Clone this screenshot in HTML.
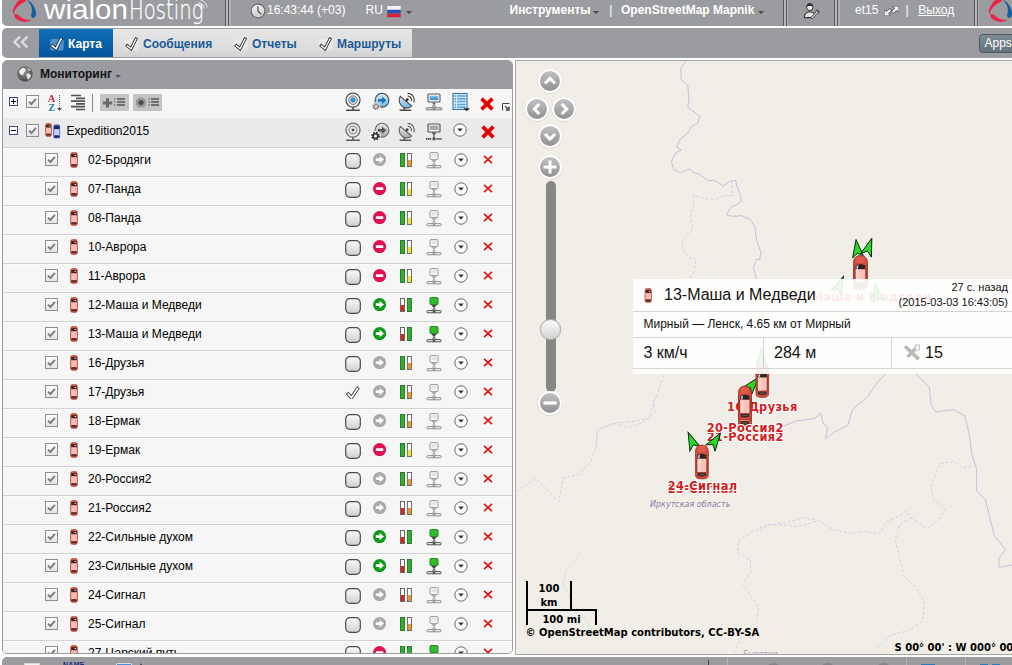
<!DOCTYPE html>
<html lang="ru"><head><meta charset="utf-8"><title>Wialon Hosting</title>
<style>
*{box-sizing:border-box;margin:0;padding:0}
html,body{width:1012px;height:665px;overflow:hidden;background:#fff}
body{position:relative;font-family:"Liberation Sans",sans-serif;font-size:12px;color:#000}
.ic{position:absolute;overflow:visible}
#top{position:absolute;left:2px;top:0;width:1012px;height:26px;background:#9b9c9f;border-radius:0 0 0 5px}
#top .t{position:absolute;top:3px;color:#fff;font-size:12px;line-height:14px;white-space:nowrap}
#top .b{font-weight:bold}
.dsep{position:absolute;top:0;width:5.500px;height:26px;background:linear-gradient(to right,#58585b 0,#58585b 1.200px,#b6b6b9 1.400px,#b6b6b9 2.900px,#58585b 3.100px,#58585b 4.200px,#b0b0b3 4.400px,#b0b0b3 5.500px)}
.caret{position:absolute;width:0;height:0;border-left:3px solid transparent;border-right:3px solid transparent;border-top:3px solid #555}
.caretw{border-top-color:#4a4a4c}
#tabs{position:absolute;left:2px;top:28px;width:1012px;height:30px;background:#9b9c9f;border-radius:5px 0 0 5px}
.tab{position:absolute;top:1px;height:28px;font-weight:bold;font-size:12px;line-height:28px;color:#1a5a96;background:linear-gradient(#e6e6e6,#dedede 60%,#d2d2d2)}
.tab span{position:absolute;top:1px;white-space:nowrap}
.tab.act{background:linear-gradient(#0f70b7,#0a61a8 50%,#06559a);color:#fff}
#apps{position:absolute;left:976.500px;top:6px;width:40px;height:19px;border:1px solid #4f5b61;border-radius:3.500px;background:linear-gradient(#7c8b92,#64747b);color:#fff;font-size:12px;line-height:17px;padding-left:5px}
#panel{position:absolute;left:2px;top:60px;width:511px;height:594px;border:1px solid #9b9c9f;border-radius:5px 5px 5px 5px;background:#f6f6f6;overflow:hidden}
#phead{position:absolute;left:-1px;top:-1px;width:511px;height:30px;background:#9b9c9f}
.ptitle{position:absolute;left:38px;top:7px;font-weight:bold;font-size:12px;line-height:14px;color:#111}
#ptool{position:absolute;left:0;top:28px;width:509px;height:29px;background:#f6f6f6}
.vsep{position:absolute;left:89px;top:4.500px;width:1px;height:18.500px;background:#8a8a8a}
.tbtn{position:absolute;top:5px;width:29px;height:17px;background:#c4c4c4}
#plist{position:absolute;left:0;top:57px;width:509px;height:540px;overflow:hidden}
.row{position:relative;height:29px;border-top:1px solid #d2d2d2;background:#f6f6f6;box-shadow:inset 0 1px 0 #fbfbfb}
.row.grp{background:#eaeaea;border-top:1px solid #eaeaea;box-shadow:none}
.row .nm{position:absolute;top:5px;font-size:12px;line-height:14px;white-space:nowrap;color:#000}
#map{position:absolute;left:515px;top:60px;width:500px;height:595px;border:1px solid #a5a5a5;background:#f1eee8;overflow:hidden}
#bottom{position:absolute;left:2px;top:657px;width:1012px;height:10px;overflow:hidden;background:#9b9c9f;border-radius:5px 0 0 0}
#ztrack{position:absolute;left:29.500px;top:120px;width:10px;height:211px;border-radius:5px;background:#878787}
#zknob{position:absolute;left:24px;top:258px;width:21px;height:21px;border-radius:50%;background:linear-gradient(#fbfbfb,#d2d2d2);border:1px solid #aeaeae;box-shadow:0 0 1px #999}
#sline{position:absolute;left:10px;top:520px;font-family:"DejaVu Sans",sans-serif;font-weight:bold;font-size:10px;color:#000;text-align:center}
#sline .sk{width:46px;height:28px;border:2px solid #000;border-top:none;border-bottom:none;line-height:14px;padding-top:1px}
#sline .sm{width:71px;height:16px;border:2px solid #000;border-bottom:none;line-height:15px;padding-top:1px}
#attr{position:absolute;left:9.500px;top:566px;font-family:"DejaVu Sans",sans-serif;font-weight:bold;font-size:10px;line-height:12px;color:#000;white-space:nowrap}
#coords{position:absolute;left:378.500px;top:581px;font-family:"DejaVu Sans",sans-serif;font-weight:bold;font-size:10px;line-height:12px;color:#000;white-space:nowrap}
#popup{position:absolute;left:117px;top:218px;width:390px;height:95px;background:rgba(255,255,255,.9);color:#111}
#popup .pr1{position:relative;height:33px;border-bottom:1px solid #d4d4d4}
#popup .pt{position:absolute;left:31px;top:6px;font-size:16px;line-height:19px;white-space:nowrap}
#popup .ptm{position:absolute;right:15px;top:1px;font-size:11px;line-height:14.500px;text-align:right;white-space:nowrap}
#popup .pr2{height:26px;border-bottom:1px solid #d4d4d4;padding-left:10.500px;font-size:12px;line-height:24px;white-space:nowrap}
#popup .pr3{position:relative;height:31px;border-bottom:1px solid #d4d4d4;font-size:16px;line-height:30px}
#popup .pr3 span.c1{position:absolute;left:0;top:0;width:131px;height:30px;padding-left:10.500px;border-right:1px solid #d4d4d4}
#popup .pr3 span.c2{position:absolute;left:131px;top:0;width:128px;height:30px;padding-left:10px;border-right:1px solid #d4d4d4}
#popup .pr3 span.c3{position:absolute;left:259px;top:0;width:131px;height:30px}
.ml{font-family:"DejaVu Sans",sans-serif;font-weight:bold;font-size:11.400px;letter-spacing:.35px;fill:#d41c1c;stroke:#fff;stroke-width:2.200px;paint-order:stroke;stroke-linejoin:round;text-anchor:middle}
</style></head><body>
<svg width="0" height="0" style="position:absolute">
<defs>
<linearGradient id="gCb" x1="0" y1="0" x2="0" y2="1"><stop offset="0" stop-color="#ffffff"/><stop offset="1" stop-color="#e4e4e4"/></linearGradient>
<linearGradient id="gBox" x1="0" y1="0" x2="0" y2="1"><stop offset="0" stop-color="#fbfbfb"/><stop offset="1" stop-color="#cfcfcf"/></linearGradient>
<linearGradient id="gBlue" x1="0" y1="0" x2="0" y2="1"><stop offset="0" stop-color="#d8edfb"/><stop offset="1" stop-color="#6fb6e6"/></linearGradient>
<linearGradient id="gScr" x1="0" y1="0" x2="0" y2="1"><stop offset="0" stop-color="#8cc4ea"/><stop offset="1" stop-color="#2f86c4"/></linearGradient>
<linearGradient id="gGr" x1="0" y1="0" x2="0" y2="1"><stop offset="0" stop-color="#e6e6e6"/><stop offset="1" stop-color="#a8a8a8"/></linearGradient>
<linearGradient id="gPan" x1="0" y1="0" x2="0" y2="1"><stop offset="0" stop-color="#c4c4c6"/><stop offset="1" stop-color="#8e8e91"/></linearGradient>
<linearGradient id="gKnob" x1="0" y1="0" x2="0" y2="1"><stop offset="0" stop-color="#f4f4f4"/><stop offset="1" stop-color="#c9c9c9"/></linearGradient>
<linearGradient id="gGlobe" x1="0" y1="0" x2="1" y2="1"><stop offset="0" stop-color="#f2f2f2"/><stop offset="1" stop-color="#8a8a8a"/></linearGradient>

<symbol id="cb" viewBox="0 0 13 13"><rect x=".5" y=".5" width="12" height="12" fill="url(#gCb)" stroke="#8e8e8e"/><path d="M3 6.6 L5.4 9 L10 3.8" fill="none" stroke="#7d7d7d" stroke-width="1.9"/></symbol>
<symbol id="plusbox" viewBox="0 0 9 9"><rect x=".5" y=".5" width="8" height="8" fill="#fff" stroke="#3c4a86"/><path d="M2 4.5H7M4.5 2V7" stroke="#000" stroke-width="1"/></symbol>
<symbol id="minusbox" viewBox="0 0 9 9"><rect x=".5" y=".5" width="8" height="8" fill="#fff" stroke="#3c4a86"/><path d="M2 4.5H7" stroke="#000" stroke-width="1"/></symbol>
<symbol id="align" viewBox="0 0 15 17"><path d="M0 1.5H10M5 4.3H14M0 7.1H14M5 9.9H14M0 12.7H14M5 15.5H14" stroke="#505050" stroke-width="1.7"/></symbol>
<symbol id="addlist" viewBox="0 0 29 16"><path d="M2.800 8.400H12.200M7.500 3.800V13" stroke="#6a6a6a" stroke-width="3"/><path d="M14 4.5H15.5M14 7.5H15.5M14 10.5H15.5" stroke="#555" stroke-width="1.2"/><path d="M17 4.5H25M17 7.5H25M17 10.5H25" stroke="#555" stroke-width="1.4"/></symbol>
<symbol id="dotlist" viewBox="0 0 29 16"><circle cx="8" cy="8" r="5.2" fill="#9a9a9a"/><circle cx="8" cy="8" r="2.6" fill="#4e4e4e"/><path d="M15.5 4.5H17M15.5 7.5H17M15.5 10.5H17" stroke="#555" stroke-width="1.2"/><path d="M18 4.5H26M18 7.5H26M18 10.5H26" stroke="#555" stroke-width="1.4"/></symbol>

<symbol id="webcam" viewBox="0 0 16 19"><circle cx="8" cy="7.7" r="6.7" fill="#f4f4f4" stroke="#4a4a4a" stroke-width="1.2"/><circle cx="8" cy="7.7" r="4" fill="#fff" stroke="#555" stroke-width=".9"/><circle cx="8" cy="7.7" r="2.6" fill="#3b8fce"/><path d="M8 14.4V17" stroke="#555" stroke-width="1.6"/><path d="M1.5 17.3H14.5" stroke="#4a4a4a" stroke-width="1.5"/></symbol>
<symbol id="webcamg" viewBox="0 0 16 19"><circle cx="8" cy="7.7" r="6.7" fill="#e6e6e6" stroke="#6a6a6a" stroke-width="1.2"/><circle cx="8" cy="7.7" r="3.8" fill="#ddd" stroke="#888" stroke-width=".9"/><circle cx="8" cy="7.7" r="1.2" fill="#444"/><path d="M8 14.4V17" stroke="#666" stroke-width="1.6"/><path d="M1.5 17.3H14.5" stroke="#5a5a5a" stroke-width="1.5"/></symbol>
<symbol id="arrgear" viewBox="0 0 20 19"><circle cx="12" cy="7.7" r="6.9" fill="url(#gBlue)" stroke="#444" stroke-width="1.1"/><path d="M8 6.4H12V4L16.3 7.7L12 11.4V9H8Z" fill="#1d73b4"/><circle cx="6" cy="14" r="4.2" fill="#f2f2f2"/><circle cx="6" cy="14" r="2.6" fill="none" stroke="#6a6a6a" stroke-width="1.6" stroke-dasharray="1.3 .75"/><circle cx="6" cy="14" r="2" fill="#f6f6f6" stroke="#777" stroke-width=".8"/><circle cx="6" cy="14" r=".8" fill="#fff" stroke="#888" stroke-width=".5"/></symbol>
<symbol id="arrgearg" viewBox="0 0 22 19"><circle cx="14" cy="7.7" r="6.9" fill="url(#gGr)" stroke="#6a6a6a" stroke-width="1.1"/><path d="M10 6.4H14V4L18.3 7.7L14 11.4V9H10Z" fill="#555"/><circle cx="7.5" cy="13.6" r="5.2" fill="#fff"/><circle cx="7.5" cy="13.6" r="3.3" fill="none" stroke="#333" stroke-width="2.2" stroke-dasharray="1.6 1"/><circle cx="7.5" cy="13.6" r="2.3" fill="none" stroke="#333" stroke-width="1.6"/></symbol>
<symbol id="dish" viewBox="0 0 16 19"><path d="M8.5 1.2A6.6 6.6 0 0 1 14.6 10" fill="none" stroke="#444" stroke-width="1.1"/><path d="M8.6 3.8A4 4 0 0 1 12.2 8.6" fill="none" stroke="#444" stroke-width="1.1"/><path d="M1.6 4.2L12.4 13.4A7.2 7.2 0 0 1 1.6 4.2Z" fill="url(#gBlue)" stroke="#444" stroke-width="1"/><circle cx="8.2" cy="7.4" r="1.4" fill="#333"/><path d="M7 9L8.2 7.4" stroke="#333" stroke-width="1"/><path d="M5.4 14.2V17" stroke="#555" stroke-width="1.8"/><path d="M1 17.3H12" stroke="#4a4a4a" stroke-width="1.5"/></symbol>
<symbol id="dishg" viewBox="0 0 16 19"><path d="M8.5 1.2A6.6 6.6 0 0 1 14.6 10" fill="none" stroke="#666" stroke-width="1.1"/><path d="M8.6 3.8A4 4 0 0 1 12.2 8.6" fill="none" stroke="#666" stroke-width="1.1"/><path d="M1.6 4.2L12.4 13.4A7.2 7.2 0 0 1 1.6 4.2Z" fill="url(#gGr)" stroke="#5a5a5a" stroke-width="1"/><circle cx="8.2" cy="7.4" r="1.4" fill="#444"/><path d="M7 9L8.2 7.4" stroke="#444" stroke-width="1"/><path d="M5.4 14.2V17" stroke="#666" stroke-width="1.8"/><path d="M1 17.3H12" stroke="#5a5a5a" stroke-width="1.5"/></symbol>
<symbol id="netblue" viewBox="0 0 18 18"><rect x="3" y="1" width="12" height="8" rx="1" fill="#fff" stroke="#555" stroke-width="1.1"/><rect x="4.6" y="2.6" width="8.8" height="4.6" fill="url(#gScr)"/><path d="M7 9.6H11L10 11H8Z" fill="#666"/><path d="M9 11V14" stroke="#666" stroke-width="1"/><path d="M9 11L6.5 15M9 11L11.500 15" stroke="#888" stroke-width=".7"/><rect x="1" y="14.800" width="16" height="2" rx="1" fill="#eee" stroke="#666" stroke-width=".9"/><rect x="7.800" y="14.500" width="2.400" height="2.600" fill="#888"/></symbol>
<symbol id="netdark" viewBox="0 0 18 18"><rect x="3" y="1" width="12" height="8" rx="1" fill="#f2f2f2" stroke="#555" stroke-width="1.2"/><rect x="4.6" y="2.600" width="8.800" height="4.400" fill="#aaa"/><path d="M6.500 9.600H11.500L10 11.500H8Z" fill="#555"/><path d="M9 11V14.500" stroke="#555" stroke-width="1.200"/><path d="M1 15.800H6.500M11.500 15.800H17" stroke="#444" stroke-width="1.800" stroke-dasharray="1.400 .5"/><rect x="7.600" y="14.400" width="2.800" height="2.800" fill="#444"/></symbol>
<symbol id="listblue" viewBox="0 0 19 19"><rect x="1" y="1" width="14" height="16" fill="#d6ebfa" stroke="#3f74a0" stroke-width="1.1"/><path d="M2.500 3.500H4M5 3.500H13.500M2.500 6.300H4M5 6.300H13.500M2.500 9.100H4M5 9.100H13.500M2.500 11.900H4M5 11.900H13.500M2.500 14.700H4M5 14.700H13.500" stroke="#55a3dc" stroke-width="1.500"/><path d="M11.500 15.800H18L14.750 18.800Z" fill="#222"/></symbol>
<symbol id="bigx" viewBox="0 0 13 13"><path d="M1.500 1.500L11.500 11.500M11.500 1.500L1.500 11.500" stroke="#e20000" stroke-width="3.400"/></symbol>
<symbol id="smx" viewBox="0 0 10 9"><path d="M1 .800L9 8.200M9 .800L1 8.200" stroke="#dc1414" stroke-width="1.700"/></symbol>
<symbol id="resize" viewBox="0 0 8 8"><path d="M.5 7.500V.5H7.500" fill="none" stroke="#444" stroke-width="1"/><path d="M3 3L7 7M7 3.500V7H3.500" fill="none" stroke="#444" stroke-width="1.100"/><rect x="4.500" y="4.500" width="3" height="3" fill="#555"/></symbol>
<symbol id="cdown" viewBox="0 0 14 14"><circle cx="7" cy="7" r="6.200" fill="#fff" stroke="#555" stroke-width=".9"/><path d="M4.200 5.600H9.800L7 8.800Z" fill="#333"/></symbol>
<symbol id="rbox" viewBox="0 0 16 16"><rect x=".7" y=".7" width="14.600" height="14.600" rx="4.200" fill="url(#gBox)" stroke="#4a4a4a" stroke-width="1.200"/></symbol>
<symbol id="tick" viewBox="0 0 14 14"><path d="M2.300 9.300L5.500 12.700L11.400 3.800" fill="none" stroke="#444" stroke-width="3.500" stroke-linejoin="miter" stroke-linecap="square"/><path d="M2.300 9.300L5.500 12.700L11.400 3.800" fill="none" stroke="#fff" stroke-width="1.700" stroke-linejoin="miter" stroke-linecap="square"/></symbol>
<symbol id="agrey" viewBox="0 0 13 13"><circle cx="6.500" cy="6.500" r="6.500" fill="#a9a9ab"/><path d="M2.800 5.200H6.500V2.800L10.800 6.500L6.500 10.200V7.800H2.800Z" fill="#fff"/></symbol>
<symbol id="agreen" viewBox="0 0 13 13"><circle cx="6.500" cy="6.500" r="6.500" fill="#0f9a1e"/><path d="M2.800 5.200H6.500V2.800L10.800 6.500L6.500 10.200V7.800H2.800Z" fill="#fff"/></symbol>
<symbol id="stop" viewBox="0 0 13 13"><circle cx="6.500" cy="6.500" r="6.500" fill="#e0114f"/><rect x="2.800" y="5.200" width="7.400" height="2.600" rx=".6" fill="#fff"/></symbol>
<symbol id="go" viewBox="0 0 13 14"><rect x="0.5" y=".5" width="4" height="13" fill="#2fb02f" stroke="#277027" stroke-width=".9"/><rect x="7.4" y=".5" width="4" height="13" fill="#fff" stroke="#5a5a5a" stroke-width=".9"/><rect x="7.8500000000000005" y="7" width="3.100" height="6.050" fill="#e8962c"/></symbol>
<symbol id="gy" viewBox="0 0 13 14"><rect x="0.5" y=".5" width="4" height="13" fill="#2fb02f" stroke="#277027" stroke-width=".9"/><rect x="7.4" y=".5" width="4" height="13" fill="#fff" stroke="#5a5a5a" stroke-width=".9"/><rect x="7.8500000000000005" y="7" width="3.100" height="6.050" fill="#f3e32e"/></symbol>
<symbol id="rg" viewBox="0 0 13 14"><rect x="0.5" y=".5" width="4" height="13" fill="#fff" stroke="#5a5a5a" stroke-width=".9"/><rect x="0.95" y="7" width="3.100" height="6.050" fill="#d42424"/><rect x="7.4" y=".5" width="4" height="13" fill="#2fb02f" stroke="#277027" stroke-width=".9"/></symbol>
<symbol id="ro" viewBox="0 0 13 14"><rect x="0.5" y=".5" width="4" height="13" fill="#fff" stroke="#5a5a5a" stroke-width=".9"/><rect x="0.95" y="7" width="3.100" height="6.050" fill="#d42424"/><rect x="7.4" y=".5" width="4" height="13" fill="#fff" stroke="#5a5a5a" stroke-width=".9"/><rect x="7.8500000000000005" y="7" width="3.100" height="6.050" fill="#e8962c"/></symbol>
<symbol id="gg" viewBox="0 0 13 14"><rect x="0.5" y=".5" width="4" height="13" fill="#2fb02f" stroke="#277027" stroke-width=".9"/><rect x="7.4" y=".5" width="4" height="13" fill="#2fb02f" stroke="#277027" stroke-width=".9"/></symbol>
<symbol id="ngrey" viewBox="0 0 16 17"><rect x="4" y=".6" width="8" height="7" rx=".8" fill="#f4f4f4" stroke="#9a9a9a" stroke-width="1"/><rect x="5.600" y="2.200" width="4.800" height="2.600" fill="#e2e2e2"/><path d="M5.500 8H10.500L9 10H7Z" fill="#aaa"/><path d="M8 10V13" stroke="#999" stroke-width="1"/><path d="M8 10.500L5.500 14M8 10.500L10.500 14" stroke="#aaa" stroke-width=".7"/><rect x=".8" y="13.600" width="14.400" height="2.200" rx="1.100" fill="#f0f0f0" stroke="#8a8a8a" stroke-width=".9"/><rect x="6.800" y="13.400" width="2.400" height="2.600" fill="#999"/></symbol>
<symbol id="ngreen" viewBox="0 0 16 17"><rect x="4" y=".6" width="8" height="7" rx=".8" fill="#35b535" stroke="#1f8a1f" stroke-width="1"/><rect x="5.400" y="1.800" width="5.200" height="3.600" fill="#2fc02f"/><path d="M5.500 8H10.500L9 10H7Z" fill="#444"/><path d="M8 10V13" stroke="#444" stroke-width="1"/><path d="M8 10.500L5.500 14M8 10.500L10.500 14" stroke="#666" stroke-width=".7"/><rect x=".8" y="13.600" width="14.400" height="2.200" rx="1.100" fill="#eee" stroke="#444" stroke-width=".9"/><rect x="6.800" y="13.400" width="2.400" height="2.600" fill="#555"/></symbol>

<symbol id="car" viewBox="0 0 8 16"><rect x=".3" y=".2" width="7.400" height="15.600" rx="2.400" fill="#b9483a"/><rect x=".3" y="5" width="7.400" height="7.500" fill="#c4695d"/><path d="M1.200 2.600Q4 1.600 6.800 2.600L6.500 5.400H1.500Z" fill="#3d2420"/><rect x="4.600" y="3" width="1.400" height="1" fill="#e9e0dc"/><rect x="1.200" y="5.300" width="5.600" height="6.900" fill="#f7bdb4"/><rect x="1.400" y="12.300" width="5.200" height="1.700" rx=".5" fill="#4b2f29"/><rect x="1.600" y=".5" width="4.800" height="1.300" rx=".65" fill="#d45e4c"/></symbol>
<symbol id="carb" viewBox="0 0 8 16"><rect x=".3" y=".2" width="7.400" height="15.600" rx="2.400" fill="#34499a"/><rect x=".3" y="5" width="7.400" height="7.500" fill="#566ab6"/><path d="M1.200 2.600Q4 1.600 6.800 2.600L6.500 5.400H1.500Z" fill="#1d2450"/><rect x="1.200" y="5.300" width="5.600" height="6.900" fill="#c6cef6"/><rect x="1.400" y="12.300" width="5.200" height="1.700" rx=".5" fill="#222a5c"/><rect x="1.600" y=".5" width="4.800" height="1.300" rx=".65" fill="#4860b2"/></symbol>
<symbol id="cars2" viewBox="0 0 16 18"><svg x="0" y="1" width="7" height="14" viewBox="0 0 8 16"><use href="#car"/></svg><svg x="8" y="2.300" width="7.500" height="14.500" viewBox="0 0 8 16"><use href="#carb"/></svg></symbol>

<symbol id="globe" viewBox="0 0 16 16"><radialGradient id="gGl2" cx=".4" cy=".3" r=".8"><stop offset="0" stop-color="#9a9a9a"/><stop offset="1" stop-color="#3c3c3c"/></radialGradient><circle cx="8" cy="8" r="7.500" fill="url(#gGl2)" stroke="#6a6a6a" stroke-width=".6"/><path d="M2.200 5.500C3 3.500 5 2 7 1.800C7.500 3 9 3.500 8.500 5C7.500 6 6.500 6.500 6.500 8C6 9.500 5 9.500 4 8.500C3 7.800 2 7 2.200 5.500Z" fill="#ededed"/><path d="M9.500 8C11 7 13 7.500 14 9C13.800 11.500 12.500 13 10.800 13.800C10.500 12 9.200 10.500 9.500 8Z" fill="#e2e2e2"/><path d="M10.500 2C12 2.500 13 3.500 13.600 4.600C12.500 5.200 11 4.500 10.500 2Z" fill="#dcdcdc"/></symbol>
<symbol id="clock" viewBox="0 0 16 16"><circle cx="8" cy="8" r="6.900" fill="url(#gKnob)" stroke="#66676a" stroke-width="1.100"/><path d="M8 3.200V8.200L11.200 11.200" fill="none" stroke="#4a4a4a" stroke-width="1.200"/></symbol>
<symbol id="flag" viewBox="0 0 14 12"><rect x="0" y="0" width="14" height="4" fill="#f4f4f4"/><rect x="0" y="4" width="14" height="4" fill="#2a50b0"/><rect x="0" y="8" width="14" height="4" fill="#d8213a"/></symbol>
<symbol id="user" viewBox="0 0 17 17"><path d="M1.300 15.600C1.300 12 3.500 10.200 6.800 9.800C9 10 10.500 10.500 11.800 11.800L9 15.600Z" fill="#e6e6e6" stroke="#333" stroke-width="1.100" stroke-linejoin="round"/><circle cx="6.800" cy="5.300" r="3.200" fill="#ececec" stroke="#333" stroke-width="1"/><path d="M3.500 5C3.300 2.300 5 .9 6.800 .9C8.600 .9 10.300 2.300 10.100 5C9 3.800 4.600 3.800 3.500 5Z" fill="#333"/><path d="M8.200 15.400L13 10.200C12.600 8.800 13.600 7.600 15 7.800L14 9.300L15.200 10.300L16.300 9C16.600 10.500 15.600 11.600 14.200 11.400L9.600 16.600C9 17 8 16.200 8.200 15.400Z" fill="#f2f2f2" stroke="#333" stroke-width=".9" stroke-linejoin="round"/></symbol>
<symbol id="expand" viewBox="0 0 15 10"><g fill="#ececec" stroke="#55565a" stroke-width="1.400" paint-order="stroke" stroke-linejoin="round"><path d="M14.500 .4H9.200L11 2.200L7.800 5.400L9.500 7.100L12.700 3.900L14.500 5.700Z"/><path d="M.5 9.600H5.800L4 7.800L7.200 4.600L5.500 2.900L2.300 6.100L.5 4.300Z"/></g></symbol>
<symbol id="dbl" viewBox="0 0 18 14"><path d="M8 1.500L2.500 7L8 12.500M15.500 1.500L10 7L15.500 12.500" fill="none" stroke="#dedede" stroke-width="2.400"/></symbol>
<symbol id="tchk" viewBox="0 0 16 15"><rect x="1.100" y="2.900" width="13.600" height="11.900" rx="2.500" fill="#fff" opacity=".3"/><path d="M3.300 9.800L7 12.800L12 3" fill="none" stroke="#333" stroke-width="3.100" stroke-linejoin="miter" stroke-linecap="square"/><path d="M3.300 9.800L7 12.800L12 3" fill="none" stroke="#fff" stroke-width="1.300" stroke-linejoin="miter" stroke-linecap="square"/></symbol>
<symbol id="tchkw" viewBox="0 0 16 15"><rect x="1.100" y="2.900" width="13.600" height="11.900" rx="2.500" fill="#6aa6dc" opacity=".7"/><path d="M3.300 9.800L7 12.800L12 3" fill="none" stroke="#0b2744" stroke-width="3.400" stroke-linejoin="miter" stroke-linecap="square"/><path d="M3.300 9.800L7 12.800L12 3" fill="none" stroke="#fff" stroke-width="1.700" stroke-linejoin="miter" stroke-linecap="square"/></symbol>
<symbol id="logo" viewBox="10 0 28 26"><path d="M19.700 -0.500L26 -0.500L26 1.200C23.500 2 18.500 5.500 16.600 7.800C15.300 9.500 14.600 11 14.400 12L13.900 14.300C12.700 13 12.700 10.500 13.500 8.600C14.500 6 17 2 19.700 -0.500Z" fill="#f0214b"/><path d="M14.300 15.200C14 13.800 16 13.600 17.400 14.500C19 15.500 19.500 16.200 20.900 17.200C22.500 18.300 24 19.100 25.600 19.500C27 19.900 28.500 20 29.900 19.900L32.200 19.200C31.500 20 30.500 20.700 29.100 21.100C27.500 21.700 26 21.900 24.400 21.900C22.500 21.800 21 21.400 19.700 20.700C18 19.900 16.800 19.200 15.800 18.400C15 17.600 14.500 16.400 14.300 15.200Z" fill="#f0214b"/><path d="M27.200 -0.300C29 0.800 30.500 2 31.500 3.100C32.800 4.500 33.900 6 34.600 7.800C35.400 9.500 35.900 11 36 12.900C36.100 14.200 35.900 15.500 35.400 16.400C34.900 17.300 34.200 17.800 33.400 18L32.200 17.800C31.500 17.300 31.100 16.500 31.100 15.600C31.200 14.300 31.700 13 31.800 11.700C31.900 10 31.800 8.500 31.500 7C31 5 29.500 3 28.300 1.600Z" fill="#1361a5"/></symbol>

<symbol id="panU" viewBox="0 0 26 26"><circle cx="13" cy="13.400" r="12.300" fill="#000" opacity=".13"/><circle cx="13" cy="13" r="11" fill="url(#gPan)" stroke="#fff" stroke-width="2"/><path d="M8 15.500L13 10.500L18 15.500" fill="none" stroke="#fff" stroke-width="3.1"/></symbol>
<symbol id="panD" viewBox="0 0 26 26"><circle cx="13" cy="13.400" r="12.300" fill="#000" opacity=".13"/><circle cx="13" cy="13" r="11" fill="url(#gPan)" stroke="#fff" stroke-width="2"/><path d="M8 11L13 16L18 11" fill="none" stroke="#fff" stroke-width="3.1"/></symbol>
<symbol id="panL" viewBox="0 0 26 26"><circle cx="13" cy="13.400" r="12.300" fill="#000" opacity=".13"/><circle cx="13" cy="13" r="11" fill="url(#gPan)" stroke="#fff" stroke-width="2"/><path d="M15.300 8L10.300 13L15.300 18" fill="none" stroke="#fff" stroke-width="3.1"/></symbol>
<symbol id="panR" viewBox="0 0 26 26"><circle cx="13" cy="13.400" r="12.300" fill="#000" opacity=".13"/><circle cx="13" cy="13" r="11" fill="url(#gPan)" stroke="#fff" stroke-width="2"/><path d="M10.700 8L15.700 13L10.700 18" fill="none" stroke="#fff" stroke-width="3.1"/></symbol>
<symbol id="zIn" viewBox="0 0 26 26"><circle cx="13" cy="13.400" r="12.300" fill="#000" opacity=".13"/><circle cx="13" cy="13" r="11" fill="url(#gPan)" stroke="#fff" stroke-width="2"/><path d="M6.500 13H19.500M13 6.500V19.500" fill="none" stroke="#fff" stroke-width="3"/></symbol>
<symbol id="zOut" viewBox="0 0 26 26"><circle cx="13" cy="13.400" r="12.300" fill="#000" opacity=".13"/><circle cx="13" cy="13" r="11" fill="url(#gPan)" stroke="#fff" stroke-width="2"/><path d="M6.500 13H19.500" fill="none" stroke="#fff" stroke-width="3.2"/></symbol>
<symbol id="mcar" viewBox="0 0 14 35"><path d="M.5 8C.5 3 3 .5 7 .5C11 .5 13.500 3 13.500 8V30C13.500 33 11.500 34.500 7 34.500C2.500 34.500 .5 33 .5 30Z" fill="#cf4b3d" stroke="#9a3328" stroke-width=".8"/><path d="M3 2.500C5 1.400 9 1.400 11 2.500L10.500 8H3.500Z" fill="#de6453" opacity=".8"/><rect x="1" y="13" width="1.600" height="15" fill="#a93a2e"/><rect x="11.400" y="13" width="1.600" height="15" fill="#a93a2e"/><path d="M2.300 11C4.500 8.800 9.500 8.800 11.700 11L11 14.500H3Z" fill="#2b2622"/><path d="M3.200 11.300L5.200 10.100L4.500 13.800H3.300Z" fill="#f2f2f2" opacity=".85"/><path d="M-.3 11.300L1 10.600M14.300 11.300L13 10.600" stroke="#8a2d22" stroke-width=".9"/><rect x="2.600" y="14.200" width="8.800" height="13.300" rx=".8" fill="#f8c3bb"/><rect x="2.600" y="14.200" width="3" height="13.300" fill="#fbd9d4" opacity=".7"/><path d="M3 28.300H11L11.300 31.200C9 32.300 5 32.300 2.700 31.200Z" fill="#3a2b26"/><path d="M4.500 29.300H9.500V30.600H4.500Z" fill="#6d6a60" opacity=".7"/></symbol>
<symbol id="sat" viewBox="0 0 18 18"><path d="M2 2.300L15.800 15.300" stroke="#b9b9b9" stroke-width="3.600"/><path d="M14 3L4.500 13" stroke="#b9b9b9" stroke-width="3.400"/><rect x="12.300" y="1" width="4" height="5" fill="#fff" stroke="#b9b9b9" stroke-width=".9"/></symbol>
</defs>
</svg>
<div id="top">
<svg class="ic" style="left:8px;top:0" width="28" height="26"><use href="#logo"/></svg>
<svg class="ic" style="left:42px;top:0" width="170" height="26" viewBox="0 0 170 26"><text x="0" y="19.300" font-family="Liberation Sans,sans-serif" font-size="28" fill="#fff" textLength="84" lengthAdjust="spacingAndGlyphs">wialon</text><text x="85" y="19.400" font-family="DejaVu Sans,sans-serif" font-weight="200" font-size="26.500" fill="#fff" textLength="74.500" lengthAdjust="spacingAndGlyphs" stroke="#fff" stroke-width=".3">Hosting</text><path d="M153.500 5.300A5.500 5.500 0 0 1 157.600 9.500M154.500 2.300A8.500 8.500 0 0 1 160.500 8.500M155.500 -.6A11.500 11.500 0 0 1 163.300 7.500" fill="none" stroke="#fff" stroke-width=".9" opacity=".9"/></svg>
<div class="dsep" style="left:223px"></div>
<svg class="ic" style="left:247.500px;top:3px" width="16" height="16"><use href="#clock"/></svg>
<span class="t" style="left:265px">16:43:44 (+03)</span>
<span class="t" style="left:363.600px">RU</span>
<svg class="ic" style="left:385px;top:5.500px" width="14" height="11.500" preserveAspectRatio="none"><use href="#flag"/></svg>
<span class="caret caretw" style="left:404px;top:11px"></span>
<span class="t b" style="left:507.500px">Инструменты</span>
<span class="caret caretw" style="left:590.500px;top:11px"></span>
<span class="t" style="left:607.200px">|</span>
<span class="t b" style="left:619px">OpenStreetMap Mapnik</span>
<span class="caret caretw" style="left:755.600px;top:11px"></span>
<div class="dsep" style="left:780.800px"></div>
<svg class="ic" style="left:801px;top:2.200px" width="17" height="17"><use href="#user"/></svg>
<div class="dsep" style="left:832.200px"></div>
<span class="t" style="left:853px">et15</span>
<svg class="ic" style="left:882px;top:6px" width="15" height="10"><use href="#expand"/></svg>
<span class="t" style="left:903.500px">|</span>
<span class="t" style="left:916.300px;text-decoration:underline">Выход</span>
<div class="dsep" style="left:971.500px"></div>
<svg class="ic" style="left:984px;top:0" width="28" height="26"><use href="#logo"/></svg>
</div>
<div id="tabs">
<svg class="ic" style="left:10px;top:7px" width="18" height="14"><use href="#dbl"/></svg>
<div class="tab act" style="left:37px;width:74px"><svg class="ic" style="left:10px;top:7px" width="16" height="15"><use href="#tchkw"/></svg><span style="left:29px">Карта</span></div>
<div class="tab" style="left:111px;width:299px">
<svg class="ic" style="left:11px;top:7px" width="16" height="15"><use href="#tchk"/></svg><span style="left:30px">Сообщения</span>
<svg class="ic" style="left:120px;top:7px" width="16" height="15"><use href="#tchk"/></svg><span style="left:139px">Отчеты</span>
<svg class="ic" style="left:205px;top:7px" width="16" height="15"><use href="#tchk"/></svg><span style="left:224px">Маршруты</span>
</div>
<div id="apps">Apps</div>
</div>
<div id="panel">
<div id="phead"><svg class="ic" style="left:15px;top:6px" width="16" height="16" ><use href="#globe"/></svg><span class="ptitle">Мониторинг</span><span class="caret" style="left:113px;top:15px"></span></div>
<div id="ptool"><svg class="ic" style="left:6px;top:8px" width="9" height="9" ><use href="#plusbox"/></svg><svg class="ic" style="left:23px;top:6px" width="13" height="13" ><use href="#cb"/></svg><svg class="ic" style="left:45px;top:5px" width="15" height="18" viewBox="0 0 15 18"><text x="0" y="8" font-family="Liberation Serif,serif" font-weight="bold" font-size="10" fill="#d8173f">A</text><text x="0.3" y="17" font-family="Liberation Serif,serif" font-weight="bold" font-size="10" fill="#1d79a8">Z</text><path d="M11.5 1V14" stroke="#666" stroke-width="1" stroke-dasharray="1 1"/><path d="M9 14H14L11.5 17Z" fill="#555"/></svg><svg class="ic" style="left:68px;top:5px" width="15" height="17" ><use href="#align"/></svg><span class="vsep"></span><span class="tbtn" style="left:97px"><svg class="ic" style="left:0px;top:0px" width="29" height="17" ><use href="#addlist"/></svg></span><span class="tbtn" style="left:130px"><svg class="ic" style="left:0px;top:0px" width="29" height="17" ><use href="#dotlist"/></svg></span><svg class="ic" style="left:341px;top:3px" width="18" height="20" ><use href="#webcam"/></svg><svg class="ic" style="left:367px;top:3px" width="20" height="20" ><use href="#arrgear"/></svg><svg class="ic" style="left:395px;top:3px" width="18" height="20" ><use href="#dish"/></svg><svg class="ic" style="left:422px;top:3px" width="18" height="20" ><use href="#netblue"/></svg><svg class="ic" style="left:449px;top:3px" width="19" height="20" ><use href="#listblue"/></svg><svg class="ic" style="left:476.8px;top:7.8px" width="14" height="14" ><use href="#bigx"/></svg><svg class="ic" style="left:499px;top:14px" width="8" height="8" ><use href="#resize"/></svg></div>
<div id="plist">
<div class="row grp"><svg class="ic" style="left:6px;top:7px" width="9" height="9" ><use href="#minusbox"/></svg><svg class="ic" style="left:23px;top:5px" width="13" height="13" ><use href="#cb"/></svg><svg class="ic" style="left:42px;top:3px" width="16" height="18" ><use href="#cars2"/></svg><span class="nm" style="left:63.500px;top:4.500px">Expedition2015</span><svg class="ic" style="left:341px;top:2.5px" width="18" height="20" ><use href="#webcamg"/></svg><svg class="ic" style="left:365px;top:2.5px" width="22" height="20" ><use href="#arrgearg"/></svg><svg class="ic" style="left:395px;top:2.5px" width="18" height="20" ><use href="#dishg"/></svg><svg class="ic" style="left:422px;top:2.5px" width="18" height="20" ><use href="#netdark"/></svg><svg class="ic" style="left:450.4px;top:4.4px" width="14" height="14" ><use href="#cdown"/></svg><svg class="ic" style="left:477.5px;top:5.5px" width="14" height="14" ><use href="#bigx"/></svg></div>
<div class="row"><svg class="ic" style="left:42px;top:5px" width="13" height="13" ><use href="#cb"/></svg><svg class="ic" style="left:67px;top:4px" width="8" height="16" ><use href="#car"/></svg><span class="nm" style="left:85px">02-Бродяги</span><svg class="ic" style="left:342px;top:5px" width="16" height="16" ><use href="#rbox"/></svg><svg class="ic" style="left:369.9px;top:4.7px" width="13.2" height="13.2" ><use href="#agrey"/></svg><svg class="ic" style="left:397px;top:5px" width="13" height="14" ><use href="#go"/></svg><svg class="ic" style="left:423px;top:3.7px" width="16" height="17" ><use href="#ngrey"/></svg><svg class="ic" style="left:450.5px;top:5px" width="14" height="14" ><use href="#cdown"/></svg><svg class="ic" style="left:480px;top:7.2px" width="10" height="9" ><use href="#smx"/></svg></div>
<div class="row"><svg class="ic" style="left:42px;top:5px" width="13" height="13" ><use href="#cb"/></svg><svg class="ic" style="left:67px;top:4px" width="8" height="16" ><use href="#car"/></svg><span class="nm" style="left:85px">07-Панда</span><svg class="ic" style="left:342px;top:5px" width="16" height="16" ><use href="#rbox"/></svg><svg class="ic" style="left:369.9px;top:4.7px" width="13.2" height="13.2" ><use href="#stop"/></svg><svg class="ic" style="left:397px;top:5px" width="13" height="14" ><use href="#gy"/></svg><svg class="ic" style="left:423px;top:3.7px" width="16" height="17" ><use href="#ngrey"/></svg><svg class="ic" style="left:450.5px;top:5px" width="14" height="14" ><use href="#cdown"/></svg><svg class="ic" style="left:480px;top:7.2px" width="10" height="9" ><use href="#smx"/></svg></div>
<div class="row"><svg class="ic" style="left:42px;top:5px" width="13" height="13" ><use href="#cb"/></svg><svg class="ic" style="left:67px;top:4px" width="8" height="16" ><use href="#car"/></svg><span class="nm" style="left:85px">08-Панда</span><svg class="ic" style="left:342px;top:5px" width="16" height="16" ><use href="#rbox"/></svg><svg class="ic" style="left:369.9px;top:4.7px" width="13.2" height="13.2" ><use href="#stop"/></svg><svg class="ic" style="left:397px;top:5px" width="13" height="14" ><use href="#gy"/></svg><svg class="ic" style="left:423px;top:3.7px" width="16" height="17" ><use href="#ngrey"/></svg><svg class="ic" style="left:450.5px;top:5px" width="14" height="14" ><use href="#cdown"/></svg><svg class="ic" style="left:480px;top:7.2px" width="10" height="9" ><use href="#smx"/></svg></div>
<div class="row"><svg class="ic" style="left:42px;top:5px" width="13" height="13" ><use href="#cb"/></svg><svg class="ic" style="left:67px;top:4px" width="8" height="16" ><use href="#car"/></svg><span class="nm" style="left:85px">10-Аврора</span><svg class="ic" style="left:342px;top:5px" width="16" height="16" ><use href="#rbox"/></svg><svg class="ic" style="left:369.9px;top:4.7px" width="13.2" height="13.2" ><use href="#stop"/></svg><svg class="ic" style="left:397px;top:5px" width="13" height="14" ><use href="#gy"/></svg><svg class="ic" style="left:423px;top:3.7px" width="16" height="17" ><use href="#ngrey"/></svg><svg class="ic" style="left:450.5px;top:5px" width="14" height="14" ><use href="#cdown"/></svg><svg class="ic" style="left:480px;top:7.2px" width="10" height="9" ><use href="#smx"/></svg></div>
<div class="row"><svg class="ic" style="left:42px;top:5px" width="13" height="13" ><use href="#cb"/></svg><svg class="ic" style="left:67px;top:4px" width="8" height="16" ><use href="#car"/></svg><span class="nm" style="left:85px">11-Аврора</span><svg class="ic" style="left:342px;top:5px" width="16" height="16" ><use href="#rbox"/></svg><svg class="ic" style="left:369.9px;top:4.7px" width="13.2" height="13.2" ><use href="#stop"/></svg><svg class="ic" style="left:397px;top:5px" width="13" height="14" ><use href="#gy"/></svg><svg class="ic" style="left:423px;top:3.7px" width="16" height="17" ><use href="#ngrey"/></svg><svg class="ic" style="left:450.5px;top:5px" width="14" height="14" ><use href="#cdown"/></svg><svg class="ic" style="left:480px;top:7.2px" width="10" height="9" ><use href="#smx"/></svg></div>
<div class="row"><svg class="ic" style="left:42px;top:5px" width="13" height="13" ><use href="#cb"/></svg><svg class="ic" style="left:67px;top:4px" width="8" height="16" ><use href="#car"/></svg><span class="nm" style="left:85px">12-Маша и Медведи</span><svg class="ic" style="left:342px;top:5px" width="16" height="16" ><use href="#rbox"/></svg><svg class="ic" style="left:369.9px;top:4.7px" width="13.2" height="13.2" ><use href="#agreen"/></svg><svg class="ic" style="left:397px;top:5px" width="13" height="14" ><use href="#rg"/></svg><svg class="ic" style="left:423px;top:3.7px" width="16" height="17" ><use href="#ngreen"/></svg><svg class="ic" style="left:450.5px;top:5px" width="14" height="14" ><use href="#cdown"/></svg><svg class="ic" style="left:480px;top:7.2px" width="10" height="9" ><use href="#smx"/></svg></div>
<div class="row"><svg class="ic" style="left:42px;top:5px" width="13" height="13" ><use href="#cb"/></svg><svg class="ic" style="left:67px;top:4px" width="8" height="16" ><use href="#car"/></svg><span class="nm" style="left:85px">13-Маша и Медведи</span><svg class="ic" style="left:342px;top:5px" width="16" height="16" ><use href="#rbox"/></svg><svg class="ic" style="left:369.9px;top:4.7px" width="13.2" height="13.2" ><use href="#agreen"/></svg><svg class="ic" style="left:397px;top:5px" width="13" height="14" ><use href="#rg"/></svg><svg class="ic" style="left:423px;top:3.7px" width="16" height="17" ><use href="#ngreen"/></svg><svg class="ic" style="left:450.5px;top:5px" width="14" height="14" ><use href="#cdown"/></svg><svg class="ic" style="left:480px;top:7.2px" width="10" height="9" ><use href="#smx"/></svg></div>
<div class="row"><svg class="ic" style="left:42px;top:5px" width="13" height="13" ><use href="#cb"/></svg><svg class="ic" style="left:67px;top:4px" width="8" height="16" ><use href="#car"/></svg><span class="nm" style="left:85px">16-Друзья</span><svg class="ic" style="left:342px;top:5px" width="16" height="16" ><use href="#rbox"/></svg><svg class="ic" style="left:369.9px;top:4.7px" width="13.2" height="13.2" ><use href="#agrey"/></svg><svg class="ic" style="left:397px;top:5px" width="13" height="14" ><use href="#go"/></svg><svg class="ic" style="left:423px;top:3.7px" width="16" height="17" ><use href="#ngrey"/></svg><svg class="ic" style="left:450.5px;top:5px" width="14" height="14" ><use href="#cdown"/></svg><svg class="ic" style="left:480px;top:7.2px" width="10" height="9" ><use href="#smx"/></svg></div>
<div class="row"><svg class="ic" style="left:42px;top:5px" width="13" height="13" ><use href="#cb"/></svg><svg class="ic" style="left:67px;top:4px" width="8" height="16" ><use href="#car"/></svg><span class="nm" style="left:85px">17-Друзья</span><svg class="ic" style="left:343px;top:5px" width="14" height="14" ><use href="#tick"/></svg><svg class="ic" style="left:369.9px;top:4.7px" width="13.2" height="13.2" ><use href="#agrey"/></svg><svg class="ic" style="left:397px;top:5px" width="13" height="14" ><use href="#go"/></svg><svg class="ic" style="left:423px;top:3.7px" width="16" height="17" ><use href="#ngrey"/></svg><svg class="ic" style="left:450.5px;top:5px" width="14" height="14" ><use href="#cdown"/></svg><svg class="ic" style="left:480px;top:7.2px" width="10" height="9" ><use href="#smx"/></svg></div>
<div class="row"><svg class="ic" style="left:42px;top:5px" width="13" height="13" ><use href="#cb"/></svg><svg class="ic" style="left:67px;top:4px" width="8" height="16" ><use href="#car"/></svg><span class="nm" style="left:85px">18-Ермак</span><svg class="ic" style="left:342px;top:5px" width="16" height="16" ><use href="#rbox"/></svg><svg class="ic" style="left:369.9px;top:4.7px" width="13.2" height="13.2" ><use href="#agrey"/></svg><svg class="ic" style="left:397px;top:5px" width="13" height="14" ><use href="#go"/></svg><svg class="ic" style="left:423px;top:3.7px" width="16" height="17" ><use href="#ngrey"/></svg><svg class="ic" style="left:450.5px;top:5px" width="14" height="14" ><use href="#cdown"/></svg><svg class="ic" style="left:480px;top:7.2px" width="10" height="9" ><use href="#smx"/></svg></div>
<div class="row"><svg class="ic" style="left:42px;top:5px" width="13" height="13" ><use href="#cb"/></svg><svg class="ic" style="left:67px;top:4px" width="8" height="16" ><use href="#car"/></svg><span class="nm" style="left:85px">19-Ермак</span><svg class="ic" style="left:342px;top:5px" width="16" height="16" ><use href="#rbox"/></svg><svg class="ic" style="left:369.9px;top:4.7px" width="13.2" height="13.2" ><use href="#stop"/></svg><svg class="ic" style="left:397px;top:5px" width="13" height="14" ><use href="#gy"/></svg><svg class="ic" style="left:423px;top:3.7px" width="16" height="17" ><use href="#ngrey"/></svg><svg class="ic" style="left:450.5px;top:5px" width="14" height="14" ><use href="#cdown"/></svg><svg class="ic" style="left:480px;top:7.2px" width="10" height="9" ><use href="#smx"/></svg></div>
<div class="row"><svg class="ic" style="left:42px;top:5px" width="13" height="13" ><use href="#cb"/></svg><svg class="ic" style="left:67px;top:4px" width="8" height="16" ><use href="#car"/></svg><span class="nm" style="left:85px">20-Россия2</span><svg class="ic" style="left:342px;top:5px" width="16" height="16" ><use href="#rbox"/></svg><svg class="ic" style="left:369.9px;top:4.7px" width="13.2" height="13.2" ><use href="#agrey"/></svg><svg class="ic" style="left:397px;top:5px" width="13" height="14" ><use href="#go"/></svg><svg class="ic" style="left:423px;top:3.7px" width="16" height="17" ><use href="#ngrey"/></svg><svg class="ic" style="left:450.5px;top:5px" width="14" height="14" ><use href="#cdown"/></svg><svg class="ic" style="left:480px;top:7.2px" width="10" height="9" ><use href="#smx"/></svg></div>
<div class="row"><svg class="ic" style="left:42px;top:5px" width="13" height="13" ><use href="#cb"/></svg><svg class="ic" style="left:67px;top:4px" width="8" height="16" ><use href="#car"/></svg><span class="nm" style="left:85px">21-Россия2</span><svg class="ic" style="left:342px;top:5px" width="16" height="16" ><use href="#rbox"/></svg><svg class="ic" style="left:369.9px;top:4.7px" width="13.2" height="13.2" ><use href="#agrey"/></svg><svg class="ic" style="left:397px;top:5px" width="13" height="14" ><use href="#ro"/></svg><svg class="ic" style="left:423px;top:3.7px" width="16" height="17" ><use href="#ngrey"/></svg><svg class="ic" style="left:450.5px;top:5px" width="14" height="14" ><use href="#cdown"/></svg><svg class="ic" style="left:480px;top:7.2px" width="10" height="9" ><use href="#smx"/></svg></div>
<div class="row"><svg class="ic" style="left:42px;top:5px" width="13" height="13" ><use href="#cb"/></svg><svg class="ic" style="left:67px;top:4px" width="8" height="16" ><use href="#car"/></svg><span class="nm" style="left:85px">22-Сильные духом</span><svg class="ic" style="left:342px;top:5px" width="16" height="16" ><use href="#rbox"/></svg><svg class="ic" style="left:369.9px;top:4.7px" width="13.2" height="13.2" ><use href="#agreen"/></svg><svg class="ic" style="left:397px;top:5px" width="13" height="14" ><use href="#rg"/></svg><svg class="ic" style="left:423px;top:3.7px" width="16" height="17" ><use href="#ngreen"/></svg><svg class="ic" style="left:450.5px;top:5px" width="14" height="14" ><use href="#cdown"/></svg><svg class="ic" style="left:480px;top:7.2px" width="10" height="9" ><use href="#smx"/></svg></div>
<div class="row"><svg class="ic" style="left:42px;top:5px" width="13" height="13" ><use href="#cb"/></svg><svg class="ic" style="left:67px;top:4px" width="8" height="16" ><use href="#car"/></svg><span class="nm" style="left:85px">23-Сильные духом</span><svg class="ic" style="left:342px;top:5px" width="16" height="16" ><use href="#rbox"/></svg><svg class="ic" style="left:369.9px;top:4.7px" width="13.2" height="13.2" ><use href="#agreen"/></svg><svg class="ic" style="left:397px;top:5px" width="13" height="14" ><use href="#rg"/></svg><svg class="ic" style="left:423px;top:3.7px" width="16" height="17" ><use href="#ngreen"/></svg><svg class="ic" style="left:450.5px;top:5px" width="14" height="14" ><use href="#cdown"/></svg><svg class="ic" style="left:480px;top:7.2px" width="10" height="9" ><use href="#smx"/></svg></div>
<div class="row"><svg class="ic" style="left:42px;top:5px" width="13" height="13" ><use href="#cb"/></svg><svg class="ic" style="left:67px;top:4px" width="8" height="16" ><use href="#car"/></svg><span class="nm" style="left:85px">24-Сигнал</span><svg class="ic" style="left:342px;top:5px" width="16" height="16" ><use href="#rbox"/></svg><svg class="ic" style="left:369.9px;top:4.7px" width="13.2" height="13.2" ><use href="#agrey"/></svg><svg class="ic" style="left:397px;top:5px" width="13" height="14" ><use href="#ro"/></svg><svg class="ic" style="left:423px;top:3.7px" width="16" height="17" ><use href="#ngrey"/></svg><svg class="ic" style="left:450.5px;top:5px" width="14" height="14" ><use href="#cdown"/></svg><svg class="ic" style="left:480px;top:7.2px" width="10" height="9" ><use href="#smx"/></svg></div>
<div class="row"><svg class="ic" style="left:42px;top:5px" width="13" height="13" ><use href="#cb"/></svg><svg class="ic" style="left:67px;top:4px" width="8" height="16" ><use href="#car"/></svg><span class="nm" style="left:85px">25-Сигнал</span><svg class="ic" style="left:342px;top:5px" width="16" height="16" ><use href="#rbox"/></svg><svg class="ic" style="left:369.9px;top:4.7px" width="13.2" height="13.2" ><use href="#agrey"/></svg><svg class="ic" style="left:397px;top:5px" width="13" height="14" ><use href="#go"/></svg><svg class="ic" style="left:423px;top:3.7px" width="16" height="17" ><use href="#ngrey"/></svg><svg class="ic" style="left:450.5px;top:5px" width="14" height="14" ><use href="#cdown"/></svg><svg class="ic" style="left:480px;top:7.2px" width="10" height="9" ><use href="#smx"/></svg></div>
<div class="row"><svg class="ic" style="left:42px;top:5px" width="13" height="13" ><use href="#cb"/></svg><svg class="ic" style="left:67px;top:4px" width="8" height="16" ><use href="#car"/></svg><span class="nm" style="left:85px">27-Царский путь</span><svg class="ic" style="left:342px;top:5px" width="16" height="16" ><use href="#rbox"/></svg><svg class="ic" style="left:369.9px;top:4.7px" width="13.2" height="13.2" ><use href="#stop"/></svg><svg class="ic" style="left:397px;top:5px" width="13" height="14" ><use href="#gg"/></svg><svg class="ic" style="left:423px;top:3.7px" width="16" height="17" ><use href="#ngreen"/></svg><svg class="ic" style="left:450.5px;top:5px" width="14" height="14" ><use href="#cdown"/></svg><svg class="ic" style="left:480px;top:7.2px" width="10" height="9" ><use href="#smx"/></svg></div>
</div></div>
<div id="map">
<svg class="ic" style="left:0;top:0" width="496" height="594" viewBox="516 61 496 594">
<g fill="none" stroke="#d6b8dc" stroke-width="1" stroke-linejoin="round">
<path d="M685.8 60.9 L680.7 69.0 L681.3 79.5 L687.9 85.5 L688.8 99.1 L687.9 107.5 L696.3 113.5 L699.9 116.5 L697.8 123.1 L690.3 127.6 L688.8 132.1 L679.8 139.7 L676.8 147.2 L681.3 150.2 L675.3 153.2 L671.4 162.2 L673.8 169.7 L679.8 172.7 L682.8 171.8 L690.3 168.8 L693.3 172.7 L699.3 174.2 L708.4 180.8 L714.4 180.2 L723.4 186.2 L729.4 181.7 L735.4 180.2 L736.9 186.2 L739.9 193.8 L741.4 201.3 L736.9 204.3 L730.9 207.3 L726.4 214.8 L732.4 216.3 L741.4 215.7 L750.4 219.3 L755.0 226.8 L756.5 240.3 L761.0 252.4 L759.5 259.9 L756.5 259.0 L753.5 268.0 L756.5 278.6"/>
<path d="M760.0 432.1 L780.3 427.6 L796.1 420.9 L814.1 418.6 L820.9 413.2 L823.1 423.1 L827.6 427.6 L825.4 438.9 L834.4 432.1 L847.9 425.4 L852.4 409.6 L868.2 396.1 L877.2 382.5 L886.2 373.5 L894.4 363.6 L902.0 356.4"/>
<path d="M902.0 356.4 L911.0 363.6 L917.8 375.8 L929.1 387.1 L931.3 405.1 L935.8 411.8 L953.9 409.6 L965.1 416.4 L969.6 436.6 L971.9 454.7 L976.4 468.2 L976.4 490.7 L985.4 499.8 L989.9 517.8 L994.4 535.8 L1005.7 549.4 L999.0 558.4 L999.0 567.4 L1012.0 565.1"/>
</g><g fill="none" stroke="#dfcbe3" stroke-width="1" stroke-dasharray="3 2" stroke-linejoin="round">
<path d="M731.8 180.2 L732.4 195.3 L723.4 195.9 L714.4 199.8 L705.4 198.3 L693.3 195.3 L693.9 204.3 L690.3 216.3 L693.3 228.3 L687.3 234.3 L681.3 243.3 L684.3 252.4 L690.3 258.4 L696.3 259.0 L693.3 274.0 L687.3 280.1 L684.3 310.1 L672.3 340.2 L663.3 376.2 L657.3 394.3 L648.3 418.3 L636.2 421.3 L615.2 422.8 L597.2 430.3 L595.7 448.4"/>
<path d="M652.9 400.0 L654.8 411.7 L645.1 421.5 L629.4 427.4 L613.8 423.5 L598.1 429.3 L596.2 446.9 L590.3 462.6 L578.6 474.3 L562.9 478.2 L559.0 501.7 L547.3 489.9 L535.6 478.2 L527.7 484.1 L516.0 491.9"/>
<path d="M816.0 521.2 L797.6 527.1 L785.8 525.1 L766.3 525.1 L750.6 533.0 L738.9 540.8 L737.0 552.5 L750.6 560.3 L750.6 572.1 L742.8 583.8 L750.6 595.5 L758.5 607.3 L756.5 622.9 L742.8 634.6 L735.0 650.3 L731.1 658.1"/>
<path d="M760.0 531.3 L769.0 524.6 L787.1 522.3 L802.8 517.8 L818.6 520.1 L832.1 529.1 L850.2 533.6 L863.7 531.3 L879.5 533.6 L886.2 522.3 L899.8 515.5 L906.5 511.0 L911.0 517.8 L899.8 524.6 L895.3 540.3 L899.8 558.4 L904.3 576.4 L917.8 589.9 L924.6 603.5 L922.3 621.5 L908.8 630.5 L890.7 635.0 L877.2 648.5"/>
<path d="M911.0 517.8 L926.8 529.1 L940.3 517.8 L944.9 508.8 L933.6 499.8 L931.3 486.2 L935.8 472.7 L940.3 463.7 L953.9 461.4 L962.9 468.2 L974.2 466.0"/>
</g><g fill="none" stroke="#cfe3c6" stroke-width=".8">
<path d="M580.5 550.6 L574.7 560.3 L566.8 568.2 L562.9 583.8 L568.8 595.5 L574.7 611.2 L586.4 621.0 L594.2 634.6"/>
</g>
<defs>
<g id="garr"><path d="M0 0L5.600 18L0 13.600L-5.600 18Z" fill="#24dc24" stroke="#0a1e0a" stroke-width=".9" stroke-linejoin="miter"/></g>
</defs>
<g>
<!-- marker A -->
<use href="#garr" transform="translate(856 239.500) rotate(-7)"/>
<use href="#garr" transform="translate(871.800 238.200) rotate(18.500)"/>
<svg x="853" y="255" width="15" height="35" viewBox="0 0 14 35" preserveAspectRatio="none"><use href="#mcar"/></svg>
<text class="ml" x="861" y="301">12-Маша и Медведи</text>
<use href="#garr" transform="translate(843.500 276.300) rotate(24)"/>
<use href="#garr" transform="translate(874.800 283.700) rotate(-12)"/>
<!-- cluster -->
<use href="#garr" transform="translate(761.500 348.200) rotate(0)"/>
<use href="#garr" transform="translate(759 377) rotate(40)"/>
<svg x="755.300" y="363.500" width="14" height="34.500" viewBox="0 0 14 35" preserveAspectRatio="none"><use href="#mcar"/></svg>
<text class="ml" x="762.300" y="411">16-Друзья</text>
<svg x="737.800" y="393" width="14.200" height="35" viewBox="0 0 14 35" preserveAspectRatio="none"><use href="#mcar"/></svg>
<svg x="737.800" y="385.500" width="14.200" height="35" viewBox="0 0 14 35" preserveAspectRatio="none"><use href="#mcar"/></svg>
<text class="ml" x="745.200" y="441">21-Россия2</text>
<text class="ml" x="745.200" y="431.600">20-Россия2</text>
<!-- marker C -->
<use href="#garr" transform="translate(688.100 432.300) rotate(-22.700)"/>
<use href="#garr" transform="translate(720.500 433.100) rotate(34)"/>
<svg x="694.900" y="444.400" width="14" height="35.200" viewBox="0 0 14 35" preserveAspectRatio="none"><use href="#mcar"/></svg>
<text class="ml" x="702.600" y="493.300">25-Сигнал</text>
<text class="ml" x="702.600" y="489.500">24-Сигнал</text>
</g>
<text x="650" y="507.100" font-family="DejaVu Sans,sans-serif" font-style="italic" font-size="8" fill="#8d7aa6">Иркутская область</text>
<text x="743" y="657" font-family="DejaVu Sans,sans-serif" font-style="italic" font-size="8" fill="#a99bb8">Бурятия</text>

</svg>
<svg class="ic" style="left:21.200px;top:6.800px" width="26" height="26"><use href="#panU"/></svg>
<svg class="ic" style="left:8px;top:35px" width="26" height="26"><use href="#panL"/></svg>
<svg class="ic" style="left:34.600px;top:35px" width="26" height="26"><use href="#panR"/></svg>
<svg class="ic" style="left:21.200px;top:61.700px" width="26" height="26"><use href="#panD"/></svg>
<svg class="ic" style="left:21.200px;top:93.300px" width="26" height="26"><use href="#zIn"/></svg>
<div id="ztrack"></div>
<div id="zknob"></div>
<svg class="ic" style="left:21.200px;top:329.200px" width="26" height="26"><use href="#zOut"/></svg>
<div id="sline">
<div class="sk">100<br>km</div>
<div class="sm">100 mi</div>
</div>
<div id="attr">© OpenStreetMap contributors, CC-BY-SA</div>
<div id="coords">S 00° 00' : W 000° 00'</div>
<div id="popup">
<div class="pr1"><svg class="ic" style="left:10.500px;top:8.500px" width="8.500" height="15"><use href="#car"/></svg><span class="pt">13-Маша и Медведи</span><span class="ptm">27 с. назад<br>(2015-03-03 16:43:05)</span></div>
<div class="pr2">Мирный — Ленск, 4.65 км от Мирный</div>
<div class="pr3"><span class="c1">3 км/ч</span><span class="c2">284 м</span><span class="c3"><svg class="ic" style="left:11px;top:6px" width="18" height="18"><use href="#sat"/></svg><span style="position:absolute;left:33px;top:0">15</span></span></div>
</div>
</div>
<div id="bottom">
<div style="position:absolute;left:21.500px;top:6px;width:16px;height:10px;border:1px solid #d8d8d8;background:#f2f2f2;border-radius:1px"></div>
<span style="position:absolute;left:61px;top:4px;font-size:7px;line-height:7px;font-weight:bold;color:#1b2d7a;letter-spacing:.3px">NAME</span>
<div style="position:absolute;left:113.500px;top:6px;width:16px;height:10px;border:1px solid #dcdcdc;background:#4a8fd6;border-radius:1px"></div>
<div style="position:absolute;left:137px;top:6px;width:0;height:0;border-left:2.500px solid transparent;border-right:2.500px solid transparent;border-bottom:4px solid #333"></div>
<div style="position:absolute;left:705.500px;top:3px;width:1px;height:6px;background:#444"></div>
<div style="position:absolute;left:725px;top:0;width:1px;height:10px;background:#b4b5b8"></div>
<div style="position:absolute;left:763px;top:5.500px;width:17px;height:17px;border-radius:50%;background:#858588"></div>
<div style="position:absolute;left:817px;top:5.500px;width:17px;height:17px;border-radius:50%;background:#858588"></div>
<div style="position:absolute;left:872.500px;top:5.500px;width:17px;height:17px;border-radius:50%;background:#858588"></div>
<div style="position:absolute;left:904px;top:0;width:1px;height:10px;background:#b4b5b8"></div>
<div style="position:absolute;left:919px;top:6.500px;width:14px;height:8px;background:#2a7ab8"></div>
<div style="position:absolute;left:962.500px;top:0;width:1px;height:10px;background:#b4b5b8"></div>
<div style="position:absolute;left:978px;top:6.500px;width:8px;height:8px;background:#2a7ab8"></div>
<div style="position:absolute;left:990px;top:6.500px;width:8px;height:8px;background:#2a7ab8"></div>
</div>
</body></html>
